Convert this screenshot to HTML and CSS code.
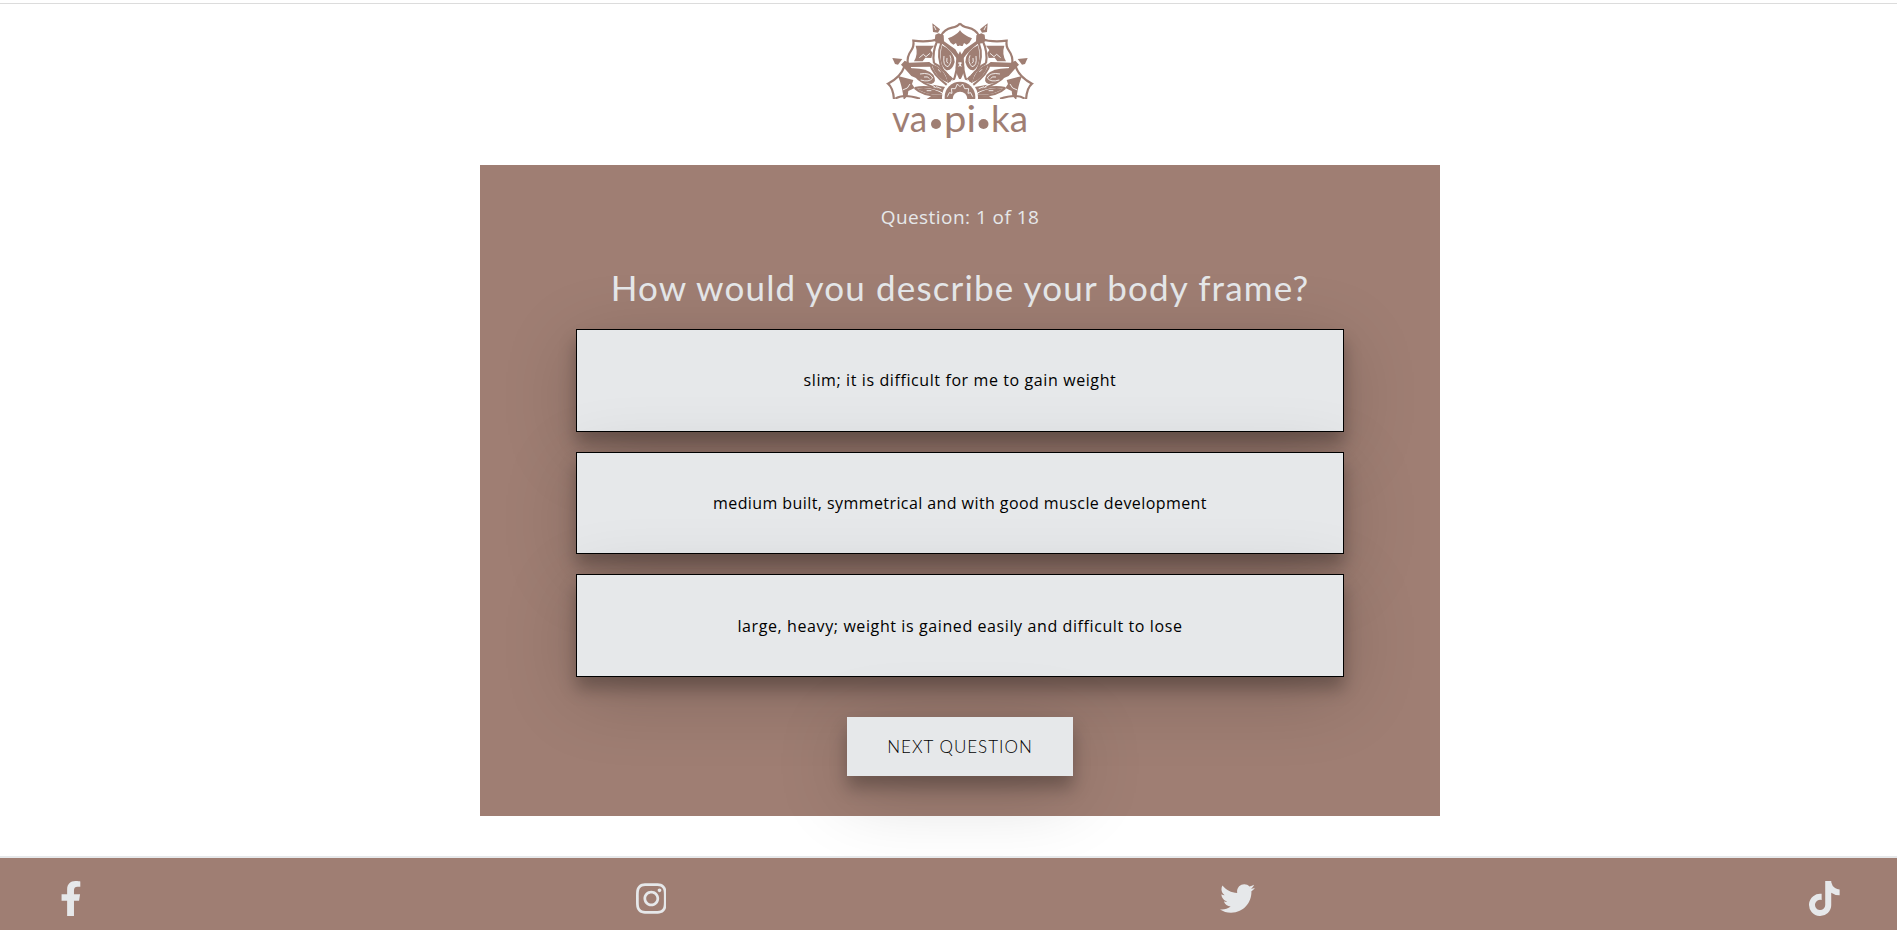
FILE: index.html
```html
<!DOCTYPE html>
<html lang="en">
<head>
<meta charset="utf-8">
<title>vapika</title>
<link rel="stylesheet" href="styles.css">
</head>
<body>
<header class="header">
  <svg class="logo" viewBox="0 0 160 130" role="img" aria-label="vapika">
    <defs>
      <clipPath id="horizon"><rect x="0" y="0" width="540" height="297"/></clipPath>
      <!-- left half of the mandala, mirrored for the right half -->
      <g id="half">
        <!-- petal outlines -->
        <path class="line" d="M213 108Q222 88 246 83Q264 79 270 70"/>
        <path class="line" d="M208 116Q176 128 130 122Q133 140 122 154Q111 168 113 192"/>
        <path class="line" d="M103 200Q92 232 54 251Q70 264 72 300"/>
        <!-- petal fills -->
        <path d="M271 91Q258 106 234 115L242 128 250 134 258 129 262 138 271 138Z"/>
        <path d="M137 137L192 137 182 150 188 160 184 174 166 173 158 184 132 184Q145 162 137 137Z"/>
        <path d="M84 228L130 240 126 252 134 264 115 273 113 287 101 300Q98 262 84 228Z"/>
        <!-- tips between petals -->
        <path d="M187 70L210 88 204 98 189 96Z"/>
        <path d="M67 174L97 177 84 194 75 192Z"/>
        <!-- hubs -->
        <path d="M196 104L206 100 221 106 222 124 256 148 266 164 262 178Q242 150 217 132L204 130 194 124Z"/>
        <path d="M93 194L104 182 118 188 178 186 190 196 182 200 122 201 138 234 124 228 108 210Z"/>
        <!-- ribs -->
        <path class="line" d="M202 122Q186 156 192 190M214 128Q198 170 220 214M118 202Q136 242 190 262"/>
        <path class="line" d="M262 170Q264 206 250 244M192 190Q224 204 240 246M180 190Q186 222 232 256M134 264Q180 254 226 278M134 264Q160 290 222 288M76 296Q100 280 150 296"/>
        <!-- leaves -->
        <path d="M216 136Q252 152 254 186Q246 214 228 210Q204 194 216 136Z"/>
        <path d="M118 205Q168 202 190 224Q202 246 184 252Q142 250 118 205Z"/>
        <path class="gap" d="M222 168Q218 198 234 200Q248 186 240 166M231 174Q228 188 234 190M150 222Q180 216 188 234Q178 248 152 240M162 231Q176 228 178 236"/>
        <!-- inner petals -->
        <path d="M271 154Q256 172 257 204Q260 228 271 242Z"/>
        <path d="M184 192Q220 200 234 248Q200 238 184 192Z"/>
        <path d="M140 266Q184 258 222 284Q174 288 140 266Z"/>
        <path d="M222 208L250 236 234 250ZM188 254L230 262 220 280ZM170 297L184 288 224 290 222 300H170Z"/>
        <!-- cut-outs -->
        <path class="gap" d="M192 78L198 90M148 173L160 163 168 170 180 160M98 270L112 264 120 252M270 136V150M204 208L212 216M170 272H184M232 216L242 228M198 260L214 266"/>
        <path class="hole" d="M271 186L264 188 268 194 264 200 271 198Z"/>
      </g>
    </defs>
    <g transform="translate(-10 -22) scale(.33333)" clip-path="url(#horizon)">
      <use href="#half" class="ink"/>
      <use href="#half" class="ink" transform="translate(540 0) scale(-1 1)"/>
      <circle class="hole" cx="270" cy="291" r="54"/>
      <circle class="ink" cx="270" cy="291" r="46"/>
      <circle class="hole" cx="270" cy="297" r="22"/>
      <path class="gap" d="M232 290L238 278 246 280 244 266 256 266 262 252 270 260 278 252 284 266 296 266 294 280 302 278 308 290"/>
    </g>
    <g class="wordmark">
      <text x="12" y="110" textLength="35" lengthAdjust="spacingAndGlyphs">va</text>
      <text x="64" y="110" textLength="32" lengthAdjust="spacingAndGlyphs">pi</text>
      <text x="111" y="110" textLength="37" lengthAdjust="spacingAndGlyphs">ka</text>
      <circle cx="56" cy="102" r="5"/>
      <circle cx="103.500" cy="102" r="5"/>
    </g>
  </svg>
</header>
<main class="quiz">
  <p class="progress">Question: 1 of 18</p>
  <h1 class="question">How would you describe your body frame?</h1>
  <div class="answers">
    <div class="answer">slim; it is difficult for me to gain weight</div>
    <div class="answer answer-medium">medium built, symmetrical and with good muscle development</div>
    <div class="answer">large, heavy; weight is gained easily and difficult to lose</div>
  </div>
  <button class="next">NEXT QUESTION</button>
</main>
<footer class="footer">
  <svg class="icon" viewBox="0 0 320 512"><path d="M279.14 288l14.22-92.66h-88.91v-60.13c0-25.35 12.42-50.06 52.24-50.06h40.42V6.26S260.43 0 225.36 0c-73.22 0-121.08 44.38-121.08 124.72v70.62H22.89V288h81.39v224h100.17V288z"/></svg>
  <svg class="icon" viewBox="0 0 448 512"><path d="M224.1 141c-63.6 0-114.9 51.300-114.900 114.900s51.300 114.900 114.900 114.900S339 319.500 339 255.900 287.700 141 224.100 141zm0 189.600c-41.100 0-74.700-33.500-74.700-74.700s33.500-74.700 74.700-74.700 74.700 33.500 74.700 74.700-33.600 74.700-74.700 74.700zm146.400-194.300c0 14.900-12 26.800-26.800 26.800-14.900 0-26.800-12-26.800-26.800s12-26.800 26.800-26.800 26.800 12 26.800 26.800zm76.100 27.200c-1.700-35.900-9.900-67.700-36.200-93.900-26.200-26.200-58-34.400-93.900-36.200-37-2.100-147.900-2.100-184.900 0-35.800 1.700-67.600 9.900-93.900 36.100s-34.400 58-36.200 93.900c-2.100 37-2.100 147.900 0 184.900 1.700 35.900 9.900 67.700 36.200 93.900s58 34.400 93.900 36.200c37 2.100 147.900 2.100 184.900 0 35.900-1.700 67.700-9.900 93.900-36.200 26.200-26.200 34.400-58 36.200-93.900 2.100-37 2.100-147.800 0-184.800zM398.800 388c-7.800 19.600-22.900 34.700-42.600 42.600-29.500 11.700-99.500 9-132.100 9s-102.700 2.600-132.100-9c-19.600-7.800-34.700-22.900-42.600-42.600-11.700-29.500-9-99.500-9-132.100s-2.600-102.700 9-132.100c7.800-19.600 22.900-34.700 42.600-42.600 29.500-11.700 99.500-9 132.100-9s102.700-2.600 132.100 9c19.600 7.800 34.700 22.900 42.600 42.600 11.700 29.500 9 99.500 9 132.100s2.700 102.700-9 132.100z"/></svg>
  <svg class="icon" viewBox="0 0 512 512"><path d="M459.37 151.716c.325 4.548.325 9.097.325 13.645 0 138.720-105.583 298.558-298.558 298.558-59.452 0-114.680-17.219-161.137-47.106 8.447.974 16.568 1.299 25.340 1.299 49.055 0 94.213-16.568 130.274-44.832-46.132-.975-84.792-31.188-98.112-72.772 6.498.974 12.995 1.624 19.818 1.624 9.421 0 18.843-1.300 27.614-3.573-48.081-9.747-84.143-51.980-84.143-102.985v-1.299c13.969 7.797 30.214 12.670 47.431 13.319-28.264-18.843-46.781-51.005-46.781-87.391 0-19.492 5.197-37.360 14.294-52.954 51.655 63.675 129.300 105.258 216.365 109.807-1.624-7.797-2.599-15.918-2.599-24.040 0-57.828 46.782-104.934 104.934-104.934 30.213 0 57.502 12.670 76.670 33.137 23.715-4.548 46.456-13.320 66.599-25.340-7.798 24.366-24.366 44.833-46.132 57.827 21.117-2.273 41.584-8.122 60.426-16.243-14.292 20.791-32.161 39.308-52.628 54.253z"/></svg>
  <svg class="icon" viewBox="0 0 448 512"><path d="M448 209.910a210.060 210.060 0 0 1-122.770-39.250v178.720A162.550 162.550 0 1 1 185 188.310v89.890a74.620 74.620 0 1 0 52.230 71.180V0h88a121.180 121.180 0 0 0 1.860 22.170 122.180 122.180 0 0 0 53.910 80.220 121.430 121.430 0 0 0 67 20.140z"/></svg>
</footer>
</body>
</html>
```
FILE: styles.css
```css
* { box-sizing: border-box; }

html { overflow: hidden; }

body {
  margin: 0;
  width: 1920px;
  background: #fff;
  font-family: "Open Sans", sans-serif;
}

.header {
  display: flex;
  justify-content: center;
  height: 162px;
  margin-top: 3px;
  padding-top: 18px;
  border-top: 1px solid #dcdcdc;
}

.logo { display: block; width: 160px; height: 130px; }

.ink, .wordmark { fill: #9f7e73; }
.line { fill: none; stroke: #9f7e73; stroke-width: 6.5; }
.gap { fill: none; stroke: #fff; stroke-width: 2.5; }
.hole { fill: #fff; }
.wordmark { font: 36px Lato, sans-serif; }

.quiz {
  display: flex;
  flex-direction: column;
  align-items: center;
  width: 960px;
  height: 651px;
  margin: 0 auto;
  background: #9f7e73;
}

.progress {
  margin: 39px 0 0;
  font-size: 19px;
  line-height: 26px;
  letter-spacing: 0.45px;
  color: #e6e8ea;
}

.question {
  margin: 33px 0 0;
  font-family: Lato, sans-serif;
  font-size: 35px;
  font-weight: 400;
  line-height: 48px;
  letter-spacing: 1.15px;
  color: #e6e8ea;
}

.answers {
  display: flex;
  flex-direction: column;
  gap: 20px;
  width: 768px;
  margin-top: 18px;
}

.answer {
  display: flex;
  align-items: center;
  justify-content: center;
  height: 102.67px;
  border: 1px solid #000;
  background: #e6e8ea;
  font-size: 16px;
  letter-spacing: 0.6px;
  color: #000;
}

.answer-medium { letter-spacing: 0.42px; }

.answer, .next {
  box-shadow: 0 12px 16px 0 rgba(0, 0, 0, 0.26), 0 17px 75px 0 rgba(0, 0, 0, 0.19);
}

.next {
  width: 226px;
  height: 59px;
  margin-top: 40px;
  border: 0;
  background: #e6e8ea;
  font: 300 17px Lato, sans-serif;
  letter-spacing: 1px;
  color: #000;
}

.footer {
  position: relative;
  display: flex;
  justify-content: space-between;
  height: 74px;
  margin-top: 40px;
  padding: 23px 80px 0 60px;
  border-top: 2px solid #e6e8ea;
  background: #9f7e73;
}

.icon { display: block; height: 35px; fill: #e6e8ea; }
```
